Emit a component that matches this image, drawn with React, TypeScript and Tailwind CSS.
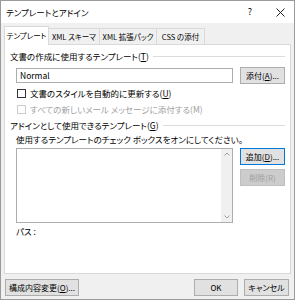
import React from "react";

const F = { fontFamily: '"Noto Sans CJK JP", "Noto Sans", sans-serif', fontFeatureSettings: '"palt"' } as React.CSSProperties;

function Btn({ children, className = "", primary = false, disabled = false }: { children: React.ReactNode; className?: string; primary?: boolean; disabled?: boolean }) {
  return (
    <div
      className={
        "flex items-center justify-center h-[17px] border text-[8px] whitespace-nowrap " +
        (disabled
          ? "bg-[#cccccc] border-[#bfbfbf] text-[#a0a0a0] "
          : primary
          ? "bg-[#e1e1e1] border-[#0078d7] text-black "
          : "bg-[#e1e1e1] border-[#adadad] text-black ") +
        className
      }
    >
      {children}
    </div>
  );
}

function Heading({ children }: { children: React.ReactNode }) {
  return (
    <div className="flex items-center gap-[4px] text-[8.5px] leading-[12px] text-black">
      <span className="whitespace-nowrap">{children}</span>
      <div className="flex-1 h-px bg-[#dcdcdc]" />
    </div>
  );
}

export default function App() {
  return (
    <div style={F} className="w-[295px] h-[300px] border border-[#9a9a9a] bg-[#f0f0f0] flex flex-col overflow-hidden text-[8.5px]">
      <div className="h-[22px] bg-white flex items-center pl-[5px] text-[8.5px] text-black shrink-0">
        <span className="flex-1">テンプレートとアドイン</span>
        <span className="w-[20px] text-center text-[9px] mr-[16px]">?</span>
        <svg width="9" height="9" viewBox="0 0 9 9" className="mr-[9px]">
          <path d="M0.5 0.5 L8.5 8.5 M8.5 0.5 L0.5 8.5" stroke="#222" strokeWidth="1" />
        </svg>
      </div>
      <div className="flex-1 flex flex-col px-[3px] pt-[3px]">
        <div className="flex items-end h-[19px] text-[7.5px] text-black relative z-10 whitespace-nowrap">
          <div className="h-[19px] w-[45px] bg-white border border-[#d9d9d9] border-b-0 flex items-center justify-center">テンプレート</div>
          <div className="h-[17px] w-[51px] border border-[#d9d9d9] border-l-0 border-b-0 flex items-center justify-center">XML スキーマ</div>
          <div className="h-[17px] w-[57px] border border-[#d9d9d9] border-l-0 border-b-0 flex items-center justify-center">XML 拡張パック</div>
          <div className="h-[17px] w-[48px] border border-[#d9d9d9] border-l-0 border-b-0 flex items-center justify-center">CSS の添付</div>
        </div>
        <div className="h-[230px] -mt-px bg-white border border-[#d9d9d9] flex flex-col px-[5px] pt-[5px]">
          <Heading>文書の作成に使用するテンプレート(<u>T</u>)</Heading>
          <div className="flex items-center mt-[5px] pl-[6px]">
            <div className="w-[218px] h-[15px] border border-[#adadad] flex items-center pl-[3px] text-black">Normal</div>
            <Btn className="w-[45px] ml-[7px]">添付(<u>A</u>)...</Btn>
          </div>
          <div className="flex items-center mt-[3px] pl-[7px] h-[12px] text-black whitespace-nowrap">
            <div className="w-[9px] h-[9px] border border-[#333] bg-white mr-[4px] shrink-0" />
            <span>文書のスタイルを自動的に更新する(<u>U</u>)</span>
          </div>
          <div className="flex items-center mt-[4px] pl-[7px] h-[12px] text-[#a0a0a0] whitespace-nowrap">
            <div className="w-[9px] h-[9px] border border-[#cccccc] bg-white mr-[4px] shrink-0" />
            <span>すべての新しいメール メッセージに添付する(M)</span>
          </div>
          <div className="mt-[4px]">
            <Heading>アドインとして使用できるテンプレート(<u>G</u>)</Heading>
          </div>
          <div className="pl-[6px] mt-[2px] h-[12px] leading-[12px] text-black whitespace-nowrap">使用するテンプレートのチェック ボックスをオンにしてください。</div>
          <div className="flex items-start mt-[3px] pl-[6px]">
            <div className="w-[219px] h-[75px] border border-[#adadad] flex">
              <div className="flex-1 bg-white" />
              <div className="w-[11px] bg-[#f0f0f0] flex flex-col items-center justify-between py-[3px]">
                <svg width="6" height="4" viewBox="0 0 6 4"><path d="M0.5 3.5 L3 1 L5.5 3.5" stroke="#a0a0a0" fill="none" /></svg>
                <svg width="6" height="4" viewBox="0 0 6 4"><path d="M0.5 0.5 L3 3 L5.5 0.5" stroke="#a0a0a0" fill="none" /></svg>
              </div>
            </div>
            <div className="flex flex-col ml-[7px] gap-[4px]">
              <Btn primary className="w-[45px]">追加(<u>D</u>)...</Btn>
              <Btn disabled className="w-[45px]">削除(R)</Btn>
            </div>
          </div>
          <div className="pl-[6px] mt-[2px] text-black h-[12px] leading-[12px]">パス :</div>
        </div>
        <div className="flex items-center mt-[5px]">
          <Btn className="w-[74px] ml-px">構成内容変更(<u>O</u>)...</Btn>
          <div className="flex-1" />
          <Btn className="w-[44px]">OK</Btn>
          <Btn className="w-[45px] ml-[6px] mr-[2px]">キャンセル</Btn>
        </div>
      </div>
    </div>
  );
}
